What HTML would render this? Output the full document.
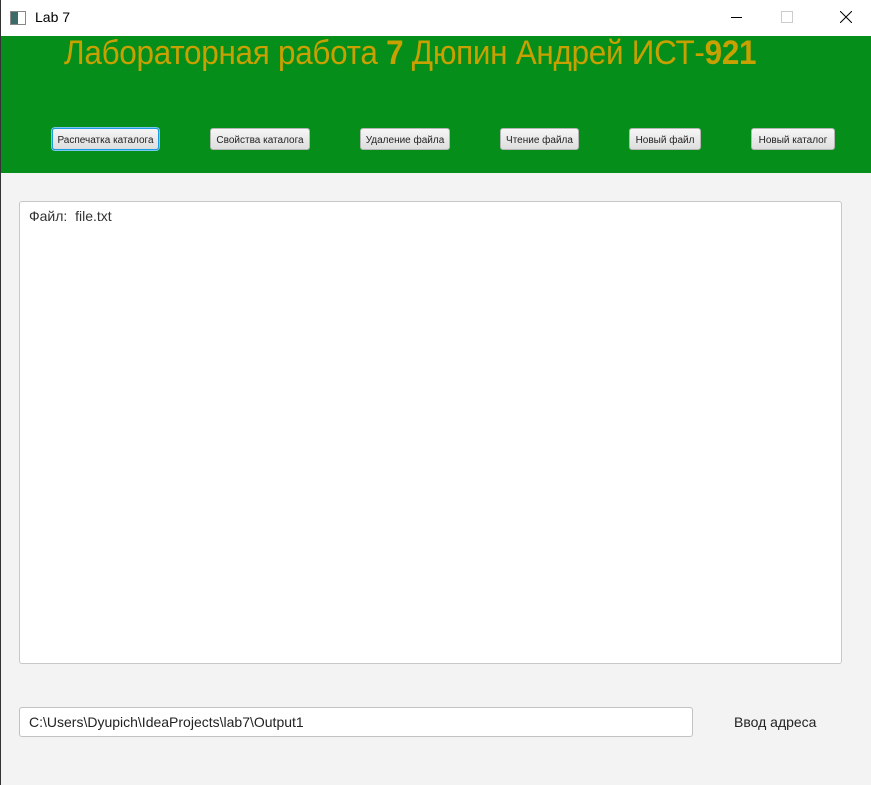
<!DOCTYPE html>
<html><head><meta charset="utf-8"><style>
body{margin:0;width:871px;height:785px;background:#f3f3f3;position:relative;overflow:hidden;font-family:"Liberation Sans",sans-serif;}
.tb{position:absolute;left:0;top:0;width:871px;height:36px;background:#fff;}
.hdr{position:absolute;left:0;top:36px;width:871px;height:137px;background:#058e1a;}
.title{position:absolute;left:64px;top:34px;font-size:34px;color:#c8a000;white-space:nowrap;letter-spacing:-0.3px;transform:scaleX(0.925);transform-origin:0 0}
.title b{font-weight:bold;}
.btn{position:absolute;top:128px;height:22px;box-sizing:border-box;border:1px solid #b5b5b5;border-radius:3px;background:linear-gradient(#f6f6f6,#dedede);font-size:10px;color:#222;text-align:center;line-height:24px;white-space:nowrap}
.area{position:absolute;left:19px;top:201px;width:823px;height:463px;box-sizing:border-box;background:#fff;border:1px solid #c8c8c8;border-radius:3px}
.area span{position:absolute;left:9px;top:6px;font-size:14px;color:#333}
.inp{position:absolute;left:19px;top:707px;width:674px;height:30px;box-sizing:border-box;background:#fff;border:1px solid #c2c2c2;border-radius:3px;font-size:14px;color:#222;padding:6px 0 0 9px}
</style></head><body>
<div style="position:absolute;left:0;top:0;width:1px;height:785px;background:#333;z-index:5"></div>
<div class="tb">
<div style="position:absolute;left:10px;top:11px;width:14px;height:12px;border:1px solid #888;background:linear-gradient(90deg,#3a6a6a 50%,#fff 50%)"></div>
<div style="position:absolute;left:35px;top:9px;font-size:14px;color:#000">Lab 7</div>
<div style="position:absolute;left:731px;top:17px;width:11px;height:1px;background:#000"></div>
<div style="position:absolute;left:781px;top:11px;width:10px;height:10px;border:1px solid #ccc"></div>
<svg style="position:absolute;left:840px;top:11px" width="12" height="12"><path d="M0 0L12 12M12 0L0 12" stroke="#000" stroke-width="1"/></svg>
</div>
<div class="hdr"></div>
<div class="title">Лабораторная работа <b>7</b> Дюпин Андрей ИСТ-<b>921</b></div>
<div class="btn" style="left:52px;width:107px;border:1px solid #1a9ae0;box-shadow:0 0 0 1px #7cc7ef">Распечатка каталога</div>
<div class="btn" style="left:210px;width:100px">Свойства каталога</div>
<div class="btn" style="left:360px;width:90px">Удаление файла</div>
<div class="btn" style="left:500px;width:79px">Чтение файла</div>
<div class="btn" style="left:629px;width:72px">Новый файл</div>
<div class="btn" style="left:751px;width:84px">Новый каталог</div>
<div class="area"><span>Файл:&nbsp; file.txt</span></div>
<div class="inp">C:\Users\Dyupich\IdeaProjects\lab7\Output1</div>
<div style="position:absolute;left:734px;top:714px;font-size:14px;color:#222">Ввод адреса</div>
</body></html>
